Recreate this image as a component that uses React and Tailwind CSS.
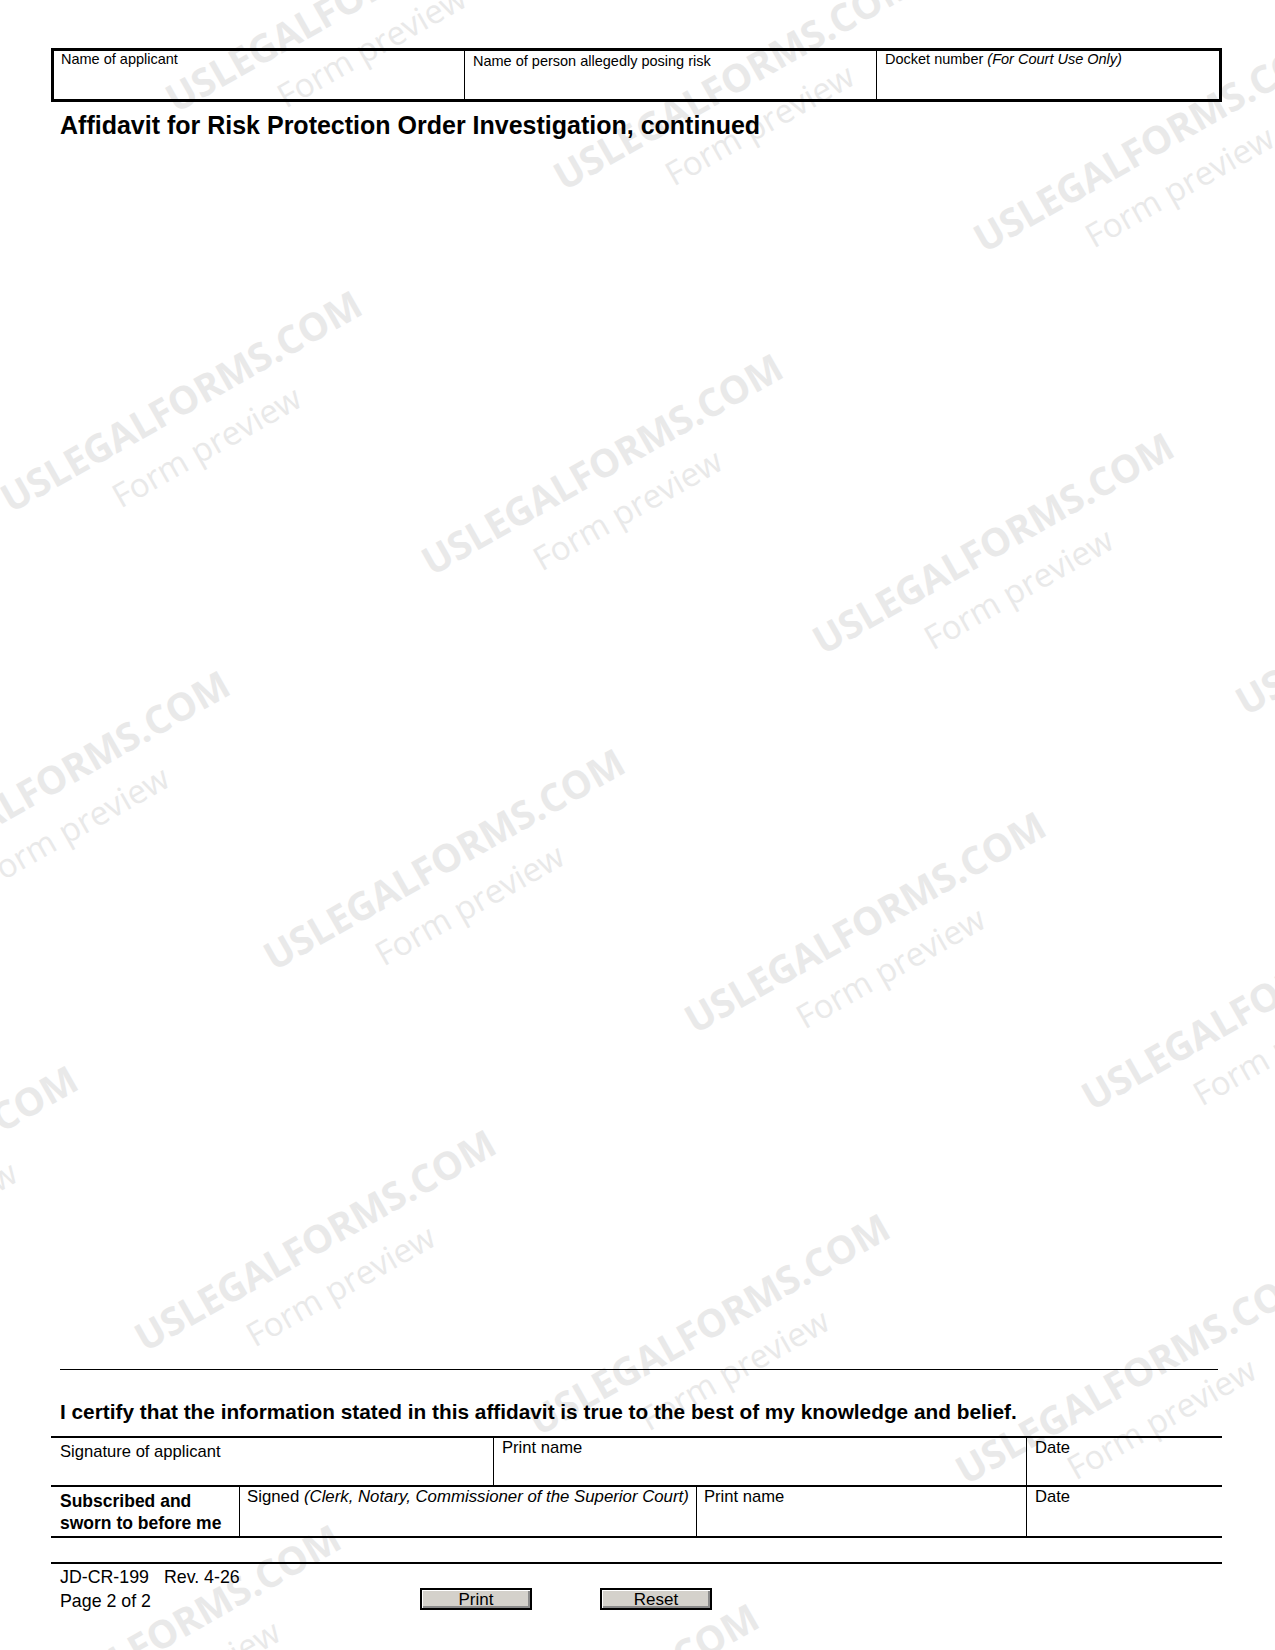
import React from "react";

const marks = [
  [178, 113], [566, 191], [986, 253],
  [13, 513], [434, 576], [825, 655], [1248, 716],
  [-119, 893], [276, 971], [697, 1034], [1094, 1111],
  [-271, 1288], [147, 1352], [541, 1436], [968, 1485],
  [-8, 1747], [410, 1826],
];

function Watermark({ x, y }) {
  return (
    <div className="absolute" style={{ left: x, top: y }}>
      <div className="absolute left-0 bottom-[-4px] origin-bottom-left -rotate-[29.5deg] whitespace-nowrap text-[#e9e9e9] font-['Open_Sans',sans-serif]">
        <div className="text-[38.5px] font-bold leading-none">USLEGALFORMS.COM</div>
        <div className="absolute left-[98px] top-[55px] text-[33px] leading-none">Form preview</div>
      </div>
    </div>
  );
}

function Button({ children, className = "" }) {
  return (
    <button
      type="button"
      className={
        "w-[112px] h-[22px] border-2 border-black bg-[#d4d1cb] shadow-[inset_1px_1px_0_#ffffff,inset_-2px_-2px_0_#8a8a8a] flex items-center justify-center text-[17px] leading-none text-black " +
        className
      }
    >
      {children}
    </button>
  );
}

export default function App() {
  return (
    <div className="relative w-[1275px] h-[1650px] overflow-hidden bg-white text-black font-['Liberation_Sans',Arial,sans-serif]">
      <div className="absolute inset-0 pointer-events-none">
        {marks.map(([x, y], i) => (
          <Watermark key={i} x={x} y={y} />
        ))}
      </div>

      <div className="relative ml-[51px] w-[1171px] pt-[48px]">
        {/* Header table */}
        <div className="flex h-[54px] border-[3px] border-black text-[14.5px] leading-[17px]">
          <div className="w-[411px] border-r border-black pl-[7px]">Name of applicant</div>
          <div className="w-[412px] border-r border-black pl-[8px] pt-[2px]">Name of person allegedly posing risk</div>
          <div className="flex-1 pl-[8px]">
            Docket number <span className="italic">(For Court Use Only)</span>
          </div>
        </div>

        <h1 className="mt-[8px] pl-[9px] text-[25px] font-bold leading-[30px]">
          Affidavit for Risk Protection Order Investigation, continued
        </h1>

        <div className="mt-[1229px] ml-[9px] w-[1158px] border-t-[1.5px] border-black" />

        <p className="mt-[29px] pl-[9px] text-[20.8px] font-bold leading-[26px]">
          I certify that the information stated in this affidavit is true to the best of my knowledge and belief.
        </p>

        {/* Signature table */}
        <div className="mt-[11px] text-[16.6px] leading-[19px]">
          <div className="flex h-[49px] border-t-2 border-black">
            <div className="w-[443px] border-r border-black pl-[9px] pt-[4px]">Signature of applicant</div>
            <div className="w-[533px] border-r border-black pl-[8px]">Print name</div>
            <div className="flex-1 pl-[8px]">Date</div>
          </div>
          <div className="flex h-[53px] border-t-2 border-b-2 border-black">
            <div className="w-[189px] border-r border-black pl-[9px] pt-[3px] text-[17.5px] font-bold leading-[22px]">
              Subscribed and
              <br />
              sworn to before me
            </div>
            <div className="w-[457px] border-r border-black pl-[7px] text-[16.8px]">
              Signed <span className="italic">(Clerk, Notary, Commissioner of the Superior Court)</span>
            </div>
            <div className="w-[330px] border-r border-black pl-[7px]">Print name</div>
            <div className="flex-1 pl-[8px]">Date</div>
          </div>
        </div>

        {/* Footer */}
        <div className="mt-[24px] border-t-2 border-black" />
        <div className="flex items-start pt-[1px] text-[17.8px] leading-[24px]">
          <div className="w-[369px] pl-[9px]">
            <div>
              JD-CR-199<span className="ml-[15px]">Rev. 4-26</span>
            </div>
            <div>Page 2 of 2</div>
          </div>
          <div className="flex pt-[23px]">
            <Button>Print</Button>
            <Button className="ml-[68px]">Reset</Button>
          </div>
        </div>
      </div>
    </div>
  );
}
